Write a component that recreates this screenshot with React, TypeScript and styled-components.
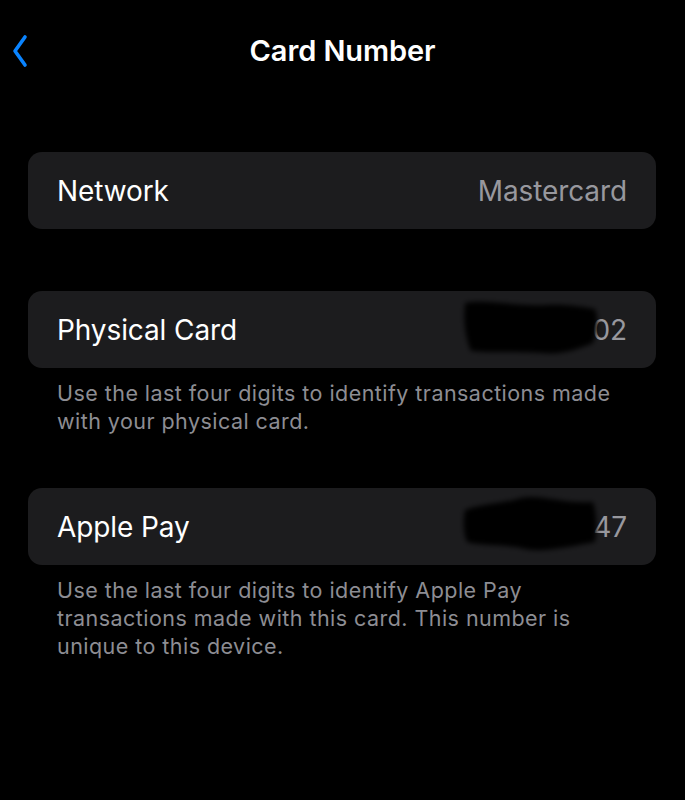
import React from "react"
import styled, { createGlobalStyle } from "styled-components"

const GlobalStyle = createGlobalStyle`
  html, body {
    margin: 0;
    padding: 0;
    background: #000;
  }
  body {
    font-family: Inter, "Liberation Sans", sans-serif;
    -webkit-font-smoothing: antialiased;
  }
`

interface Row {
  label: string
  value: string
  redacted?: boolean
  footer?: string
}

const rows: Row[] = [
  { label: "Network", value: "Mastercard" },
  {
    label: "Physical Card",
    value: "02",
    redacted: true,
    footer: "Use the last four digits to identify transactions made with your physical card.",
  },
  {
    label: "Apple Pay",
    value: "47",
    redacted: true,
    footer:
      "Use the last four digits to identify Apple Pay transactions made with this card. This number is unique to this device.",
  },
]

const BackIcon = () => (
  <svg width="16" height="34" viewBox="0 0 16 34" fill="none">
    <path
      d="M13 3 L3 17 L13 31"
      stroke="#0a84ff"
      strokeWidth="3.6"
      strokeLinecap="round"
      strokeLinejoin="round"
    />
  </svg>
)

// hand-drawn redaction blob over the card digits
const Scribble = ({ variant }: { variant: number }) => (
  <ScribbleSvg width="150" height="70" viewBox="0 0 150 70" $variant={variant}>
    <defs>
      <filter id={`blur${variant}`} x="-10%" y="-10%" width="120%" height="120%">
        <feGaussianBlur stdDeviation="2.4" />
      </filter>
    </defs>
    {variant === 1 ? (
      <path
        d="M8 10 C30 6 60 14 90 12 C110 11 125 14 138 16 C142 26 140 40 136 50 C122 56 104 62 86 60 C62 58 32 60 14 58 C8 44 6 26 8 10 Z"
        fill="#000"
        filter={`url(#blur${variant})`}
      />
    ) : (
      <path
        d="M6 20 C22 14 42 14 62 8 C82 4 102 14 134 12 C138 24 138 40 136 52 C112 56 82 64 62 58 C42 54 22 56 8 52 C4 42 4 30 6 20 Z"
        fill="#000"
        filter={`url(#blur${variant})`}
      />
    )}
  </ScribbleSvg>
)

const App = () => {
  return (
    <>
      <GlobalStyle />
      <Screen>
        <NavBar>
          <BackButton>
            <BackIcon />
          </BackButton>
          <Title>Card Number</Title>
        </NavBar>
        <Sections>
          {rows.map((row, i) => (
            <Section key={i}>
              <Cell>
                <Label>{row.label}</Label>
                <ValueWrap>
                  {row.redacted && <Scribble variant={i} />}
                  <Value>{row.value}</Value>
                </ValueWrap>
              </Cell>
              {row.footer && <Footer>{row.footer}</Footer>}
            </Section>
          ))}
        </Sections>
      </Screen>
    </>
  )
}

const Screen = styled.div`
  width: 685px;
  height: 800px;
  background: #000;
  color: #fff;
  overflow: hidden;
`

const NavBar = styled.div`
  position: relative;
  height: 102px;
  display: flex;
  align-items: flex-start;
  justify-content: center;
  padding-top: 33px;
  box-sizing: border-box;
`

const BackButton = styled.div`
  position: absolute;
  left: 12px;
  top: 34px;
  display: flex;
`

const Title = styled.div`
  font-size: 29px;
  font-weight: 600;
  letter-spacing: -0.1px;
  line-height: 36px;
`

const Sections = styled.div`
  display: flex;
  flex-direction: column;
  gap: 62px;
  padding: 50px 29px 0 28px;
`

const Section = styled.div`
  display: flex;
  flex-direction: column;
`

const Cell = styled.div`
  height: 77px;
  background: #1c1c1e;
  border-radius: 14px;
  display: flex;
  align-items: center;
  justify-content: space-between;
  padding: 0 29px;
`

const Label = styled.div`
  font-size: 28px;
  font-weight: 400;
  letter-spacing: -0.1px;
`

const ValueWrap = styled.div`
  position: relative;
  display: flex;
  align-items: center;
`

const Value = styled.div`
  font-size: 28px;
  color: #98989e;
  letter-spacing: -0.1px;
`

const ScribbleSvg = styled.svg<{ $variant: number }>`
  position: absolute;
  right: ${(p) => (p.$variant === 1 ? "20px" : "18px")};
  top: ${(p) => (p.$variant === 1 ? "-20px" : "-20px")};
`

const Footer = styled.div`
  padding: 11px 29px 0;
  margin-bottom: -9px;
  font-size: 21.5px;
  line-height: 28px;
  color: #8d8d93;
  letter-spacing: 0.45px;
`

export default App
